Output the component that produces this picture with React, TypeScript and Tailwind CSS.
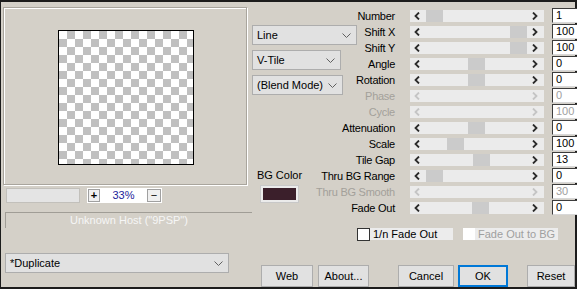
import React from 'react';

type Row = { label: string; value: string; thumb?: number; disabled?: boolean; row: string };

// Slider rows — thumb is the offset (px) inside the track between the arrows.
const rows: Row[] = [
  { label: 'Number', value: '1', thumb: 2, row: 'row-start-1' },
  { label: 'Shift X', value: '100', thumb: 86, row: 'row-start-2' },
  { label: 'Shift Y', value: '100', thumb: 86, row: 'row-start-3' },
  { label: 'Angle', value: '0', thumb: 44, row: 'row-start-4' },
  { label: 'Rotation', value: '0', thumb: 44, row: 'row-start-5' },
  { label: 'Phase', value: '0', disabled: true, row: 'row-start-6' },
  { label: 'Cycle', value: '100', disabled: true, row: 'row-start-7' },
  { label: 'Attenuation', value: '0', thumb: 44, row: 'row-start-8' },
  { label: 'Scale', value: '100', thumb: 23, row: 'row-start-9' },
  { label: 'Tile Gap', value: '13', thumb: 49, row: 'row-start-10' },
  { label: 'Thru BG Range', value: '0', thumb: 2, row: 'row-start-11' },
  { label: 'Thru BG Smooth', value: '30', disabled: true, row: 'row-start-12' },
  { label: 'Fade Out', value: '0', thumb: 48, row: 'row-start-13' },
];

function Arrow({ dir, disabled }: { dir: 'left' | 'right'; disabled?: boolean }) {
  return (
    <svg width="6" height="8" viewBox="0 0 6 8" className="shrink-0">
      <polyline
        points={dir === 'left' ? '5,0.5 1.5,4 5,7.5' : '1,0.5 4.5,4 1,7.5'}
        fill="none"
        stroke={disabled ? '#c4c4c4' : '#2a2a2a'}
        strokeWidth="1.8"
      />
    </svg>
  );
}

function Chevron() {
  return (
    <svg width="9" height="5" viewBox="0 0 9 5" className="shrink-0">
      <polyline points="0.5,0.5 4.5,4.5 8.5,0.5" fill="none" stroke="#606060" strokeWidth="1" />
    </svg>
  );
}

function Select({ label, width }: { label: string; width: string }) {
  return (
    <div className={`flex h-[20px] items-center justify-between border border-[#adadad] bg-[#e1e1e1] pl-[4px] pr-[5px] ${width}`}>
      <span className="text-[11px] text-black">{label}</span>
      <Chevron />
    </div>
  );
}

function Button({ label, width, focused }: { label: string; width: string; focused?: boolean }) {
  return (
    <div
      className={`flex h-[22px] items-center justify-center bg-[#e1e1e1] text-[11px] text-black ${width} ${
        focused ? 'border-2 border-[#0078d7]' : 'border border-[#adadad]'
      }`}
    >
      {label}
    </div>
  );
}

export default function App() {
  return (
    <div
      className="flex h-[289px] w-[577px] border-t-2 border-r-2 border-b-2 border-l border-[#1c1c1c] bg-[#d4d0c8] font-['Liberation_Sans',Arial,sans-serif] leading-none"
    >
      {/* Left column: preview, zoom, host status, preset */}
      <div className="flex w-[251px] shrink-0 flex-col">
        <div className="ml-[2px] mt-[5px] h-[178px] w-[244px] border border-[#a9a59d] shadow-[inset_1px_1px_0_#ffffff,1px_1px_0_#ffffff]">
          <div className="ml-[54px] mt-[22px] h-[135px] w-[136px] border border-black bg-[repeating-conic-gradient(#c0c0c0_0_25%,#ffffff_0_50%)] bg-[length:16px_16px]" />
        </div>

        <div className="ml-[5px] mt-[3px] flex h-[15px] items-center">
          <div className="h-[15px] w-[74px] border border-[#c2c0bb] bg-[#e4e4e4]" />
          <div className="ml-[7px] flex h-[15px] w-[75px] items-center justify-between bg-white px-[1px]">
            <div className="flex h-[13px] w-[12px] items-center justify-center border border-[#a0a0a0] bg-[#f0f0f0] text-[11px] font-bold text-black">
              +
            </div>
            <span className="text-[11px] text-[#1c1c9a]">33%</span>
            <div className="flex h-[13px] w-[14px] items-center justify-center border border-[#a0a0a0] bg-[#f0f0f0] text-[11px] text-black">
              −
            </div>
          </div>
        </div>

        <div className="ml-[4px] mt-[9px] flex h-[16px] w-[247px] items-center justify-center border-t border-l border-[#a09d96] border-r-white border-b-white text-[11px] text-[#f6f6f6]">
          Unknown Host ("9PSP")
        </div>

        <div className="ml-[4px] mt-[25px]">
          <Select label="*Duplicate" width="w-[224px]" />
        </div>
      </div>

      {/* Right part: mode selects, sliders, checkboxes, buttons */}
      <div className="flex flex-1 flex-col">
        <div className="mt-[6px] grid grid-cols-[148px_138px_29px] grid-rows-[repeat(13,16px)] gap-x-[7px]">
          {rows.map((r) => (
            <React.Fragment key={r.label}>
              <div
                className={`col-start-1 ${r.row} self-center justify-self-end whitespace-nowrap pr-[5px] text-[11px] tracking-[-0.25px] ${
                  r.disabled ? 'text-[#a3a09a]' : 'text-black'
                }`}
              >
                {r.label}
              </div>
              <div className={`col-start-2 ${r.row} flex items-center`}>
                <div className="ml-[3px] flex h-[12px] w-[134px] items-center bg-[#ebebeb]">
                  <div className="flex w-[14px] pl-[4px]">
                    <Arrow dir="left" disabled={r.disabled} />
                  </div>
                  <div className="h-full flex-1">
                    {r.thumb !== undefined && (
                      <div className="h-full w-[17px] bg-[#cbcbcb]" style={{ marginLeft: r.thumb }} />
                    )}
                  </div>
                  <div className="flex w-[14px] pl-[2px]">
                    <Arrow dir="right" disabled={r.disabled} />
                  </div>
                </div>
              </div>
              <div
                className={`col-start-3 ${r.row} flex h-[15px] items-center border border-t-[#3c3c3c] border-l-[#3c3c3c] border-r-[#6c6c6c] border-b-[#d8d8d8] bg-white pl-[3px] text-[11px] ${
                  r.disabled ? 'text-[#a0a0a0]' : 'text-black'
                }`}
              >
                {r.value}
              </div>
            </React.Fragment>
          ))}

          <div className="col-start-1 row-start-1 row-span-13 flex flex-col items-start">
            <div className="mt-[17px]">
              <Select label="Line" width="w-[105px]" />
            </div>
            <div className="mt-[5px]">
              <Select label="V-Tile" width="w-[89px]" />
            </div>
            <div className="mt-[5px]">
              <Select label="(Blend Mode)" width="w-[91px]" />
            </div>
            <div className="ml-[9px] mt-[75px] flex w-[37px] flex-col items-center">
              <span className="whitespace-nowrap text-[11px] text-black">BG Color</span>
              <div className="mt-[5px] h-[16px] w-[37px] border-2 border-[#ebebeb] bg-[#3b1f2b] shadow-[0_0_0_1px_#c8c8c8]" />
            </div>
          </div>
        </div>

        <div className="ml-[105px] mt-[11px] flex h-[14px] items-center">
          <div className="h-[13px] w-[13px] border border-[#333333] bg-white" />
          <div className="flex h-[12px] w-[83px] items-center bg-[#ececec] pl-[3px] text-[11px] text-black">1/n Fade Out</div>
          <div className="ml-[10px] h-[12px] w-[12px] bg-white" />
          <div className="flex h-[12px] w-[83px] items-center bg-[#ececec] pl-[3px] text-[11px] text-[#9f9f9f]">Fade Out to BG</div>
        </div>

        <div className="ml-[9px] mt-[24px] flex">
          <Button label="Web" width="w-[52px]" />
          <div className="ml-[5px]">
            <Button label="About..." width="w-[51px]" />
          </div>
          <div className="ml-[29px]">
            <Button label="Cancel" width="w-[56px]" />
          </div>
          <div className="ml-[4px]">
            <Button label="OK" width="w-[50px]" focused />
          </div>
          <div className="ml-[19px]">
            <Button label="Reset" width="w-[48px]" />
          </div>
        </div>
      </div>
    </div>
  );
}
